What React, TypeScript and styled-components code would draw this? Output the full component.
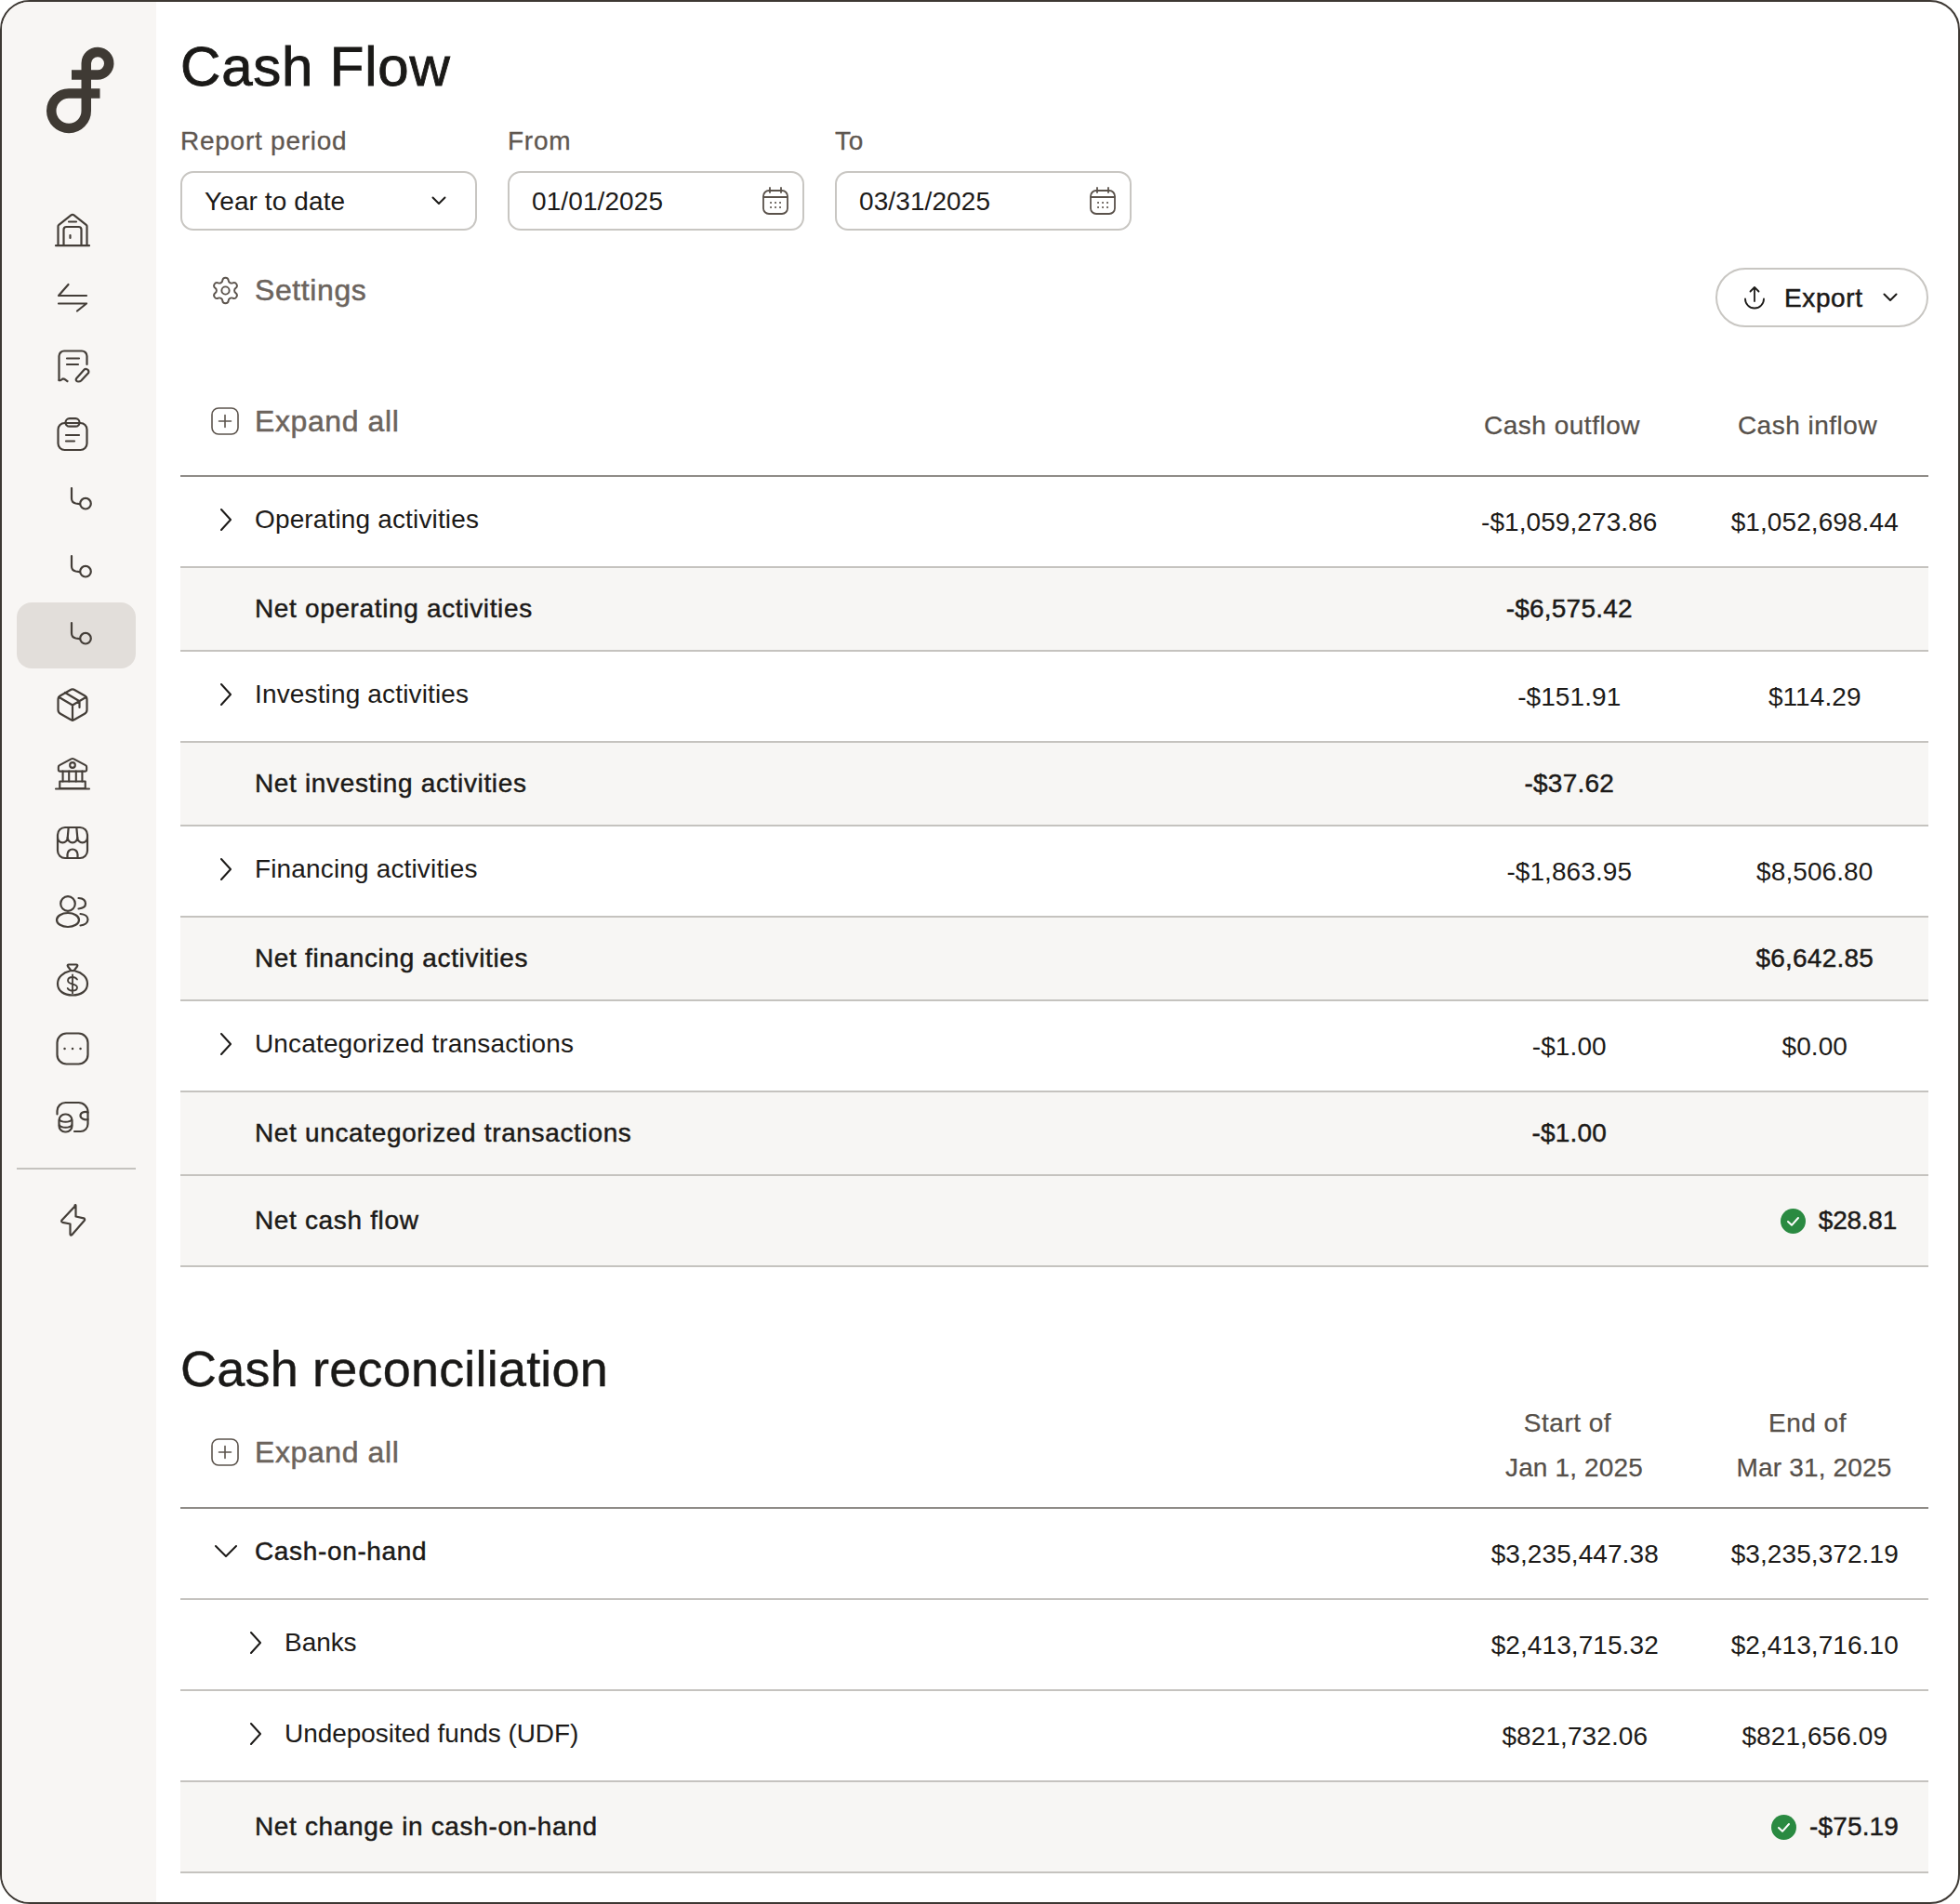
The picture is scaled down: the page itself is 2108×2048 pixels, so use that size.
import React from "react";
import styled, { createGlobalStyle } from "styled-components";
import { Settings as SettingsGear } from "lucide-react";

const Global = createGlobalStyle`
  html, body {
    margin: 0;
    background: #fff;
  }
  body {
    font-family: "Liberation Sans", Arial, sans-serif;
    color: #1c1a18;
  }
`;

const ICON = "#443e38";

const Warehouse = () => (
  <NavSvg viewBox="0 0 36 36">
    <path d="M2.5 35V14.5a2 2 0 0 1 .8-1.6L16.5 2.4a2.4 2.4 0 0 1 3 0l13.2 10.5a2 2 0 0 1 .8 1.6V35" />
    <path d="M0 35.2h36" />
    <path d="M8.5 35V18a3 3 0 0 1 3-3h13a3 3 0 0 1 3 3v17" />
    <path d="M14 9.500h8M15.500 24v3" />
  </NavSvg>
);

const Swap = () => (
  <NavSvg viewBox="0 0 36 36">
    <path d="M3 16h30M3 16L13.5 4M3 24.500h30M33 24.500L23 32.500" />
  </NavSvg>
);

const Invoice = () => (
  <NavSvg viewBox="0 0 36 36">
    <path d="M3.500 33V7a5.500 5.500 0 0 1 5.500-5.500h19a5.500 5.500 0 0 1 5.500 5.500v9" />
    <path d="M3.500 33c1.500 1 2.500-.5 4-1.500 1.500-.5 3 1 5 2.500" />
    <path d="M12 9.500h13M12 16h12" />
    <path d="M24 34.500c-2 0-3-2-1.800-3.500l8-9c2-2.200 6-.5 5 3l-8 8.500c-.8.800-2 1-3.200 1z" />
  </NavSvg>
);

const Clipboard = () => (
  <NavSvg viewBox="0 0 36 36">
    <rect x="2.500" y="6" width="31" height="29" rx="7" />
    <rect x="10.500" y="1.200" width="15" height="8.500" rx="4.200" />
    <path d="M11 19h14M11 25.500h9" />
  </NavSvg>
);

const SubBranch = () => (
  <SubSvg viewBox="0 0 26 26">
    <path d="M3 2v11c0 3 2 5 4.500 5.500l4 .6" />
    <circle cx="18" cy="18.700" r="5.800" />
  </SubSvg>
);

const Box = () => (
  <NavSvg viewBox="0 0 36 36">
    <path d="M15.500 2.200a5 5 0 0 1 5 0l10.500 6a5 5 0 0 1 2.500 4.300v11a5 5 0 0 1-2.500 4.300l-10.500 6a5 5 0 0 1-5 0L5 27.800a5 5 0 0 1-2.500-4.300v-11A5 5 0 0 1 5 8.200z" />
    <path d="M3.200 9.800L18 18.500l14.800-8.700M18 18.500V35M10 5l15.500 9.300V21" />
  </NavSvg>
);

const Bank = () => (
  <NavSvg viewBox="0 0 38 38">
    <path d="M3 15v-3.500a2 2 0 0 1 1.200-1.800L17.500 2.500a3.500 3.500 0 0 1 3 0l13.300 7.200a2 2 0 0 1 1.200 1.800V15a1.500 1.500 0 0 1-1.500 1.500h-29A1.500 1.500 0 0 1 3 15z" />
    <circle cx="19" cy="9.500" r="3" />
    <path d="M8 16.500v11.500M15 16.500v11.500M23 16.500v11.500M30 16.500v11.500" />
    <path d="M4.500 28h29v8h-29zM0 36.500h38" />
  </NavSvg>
);

const Store = () => (
  <NavSvg viewBox="0 0 36 36">
    <rect x="2" y="2" width="32" height="33" rx="8" />
    <path d="M2 13a5.300 5.300 0 0 0 10.700 0 5.300 5.300 0 0 0 10.600 0A5.300 5.300 0 0 0 34 13" />
    <path d="M12.700 13L13.700 2M23.300 13L22.300 2" />
    <path d="M12.500 35v-4a5.500 5.500 0 0 1 11 0v4" />
  </NavSvg>
);

const Users = () => (
  <NavSvg viewBox="0 0 36 36">
    <circle cx="13" cy="10" r="7.800" />
    <ellipse cx="13" cy="27.500" rx="12" ry="7.500" />
    <path d="M24.500 4c4 .2 7.500 1.800 7.500 6 0 3-3 5-7.500 5.500M26.500 21c4.500.3 8 2.500 8 6 0 3.500-3.500 6-8 6.500" />
  </NavSvg>
);

const MoneyBag = () => (
  <NavSvg viewBox="0 0 36 36">
    <path d="M13 3.500c-.8-1 0-2 1-2h8c1 0 1.800 1 1 2l-3.500 4.700h-3z" />
    <path d="M15 8.500C8 10 2 15 2 22c0 8 7 12.500 16 12.500S34 30 34 22c0-7-6-12-13-13.500" />
    <path d="M23 17.500c-1-1.500-3-2.500-5-2.500-3 0-5 1.500-5 3.800 0 5 10 2.500 10 7.200 0 2.300-2 3.700-5 3.700-2.300 0-4.300-1-5.300-2.700M18 12.500v20" strokeWidth="1.800" />
  </NavSvg>
);

const ChatDots = () => (
  <NavSvg viewBox="0 0 36 36">
    <rect x="1.500" y="1.500" width="33" height="33" rx="10" />
    <path d="M9.500 18h.1M18 18h.1M26.500 18h.1" strokeWidth="2.400" />
  </NavSvg>
);

const WalletCoins = () => (
  <NavSvg viewBox="0 0 36 36">
    <path d="M1.500 14.500V11a9 9 0 0 1 9-9h14a10 10 0 0 1 10 10v13a8 8 0 0 1-8 8H20" />
    <path d="M34.500 12.500c-4-1.500-8 .5-8 3.500s4 5 8 4" />
    <rect x="3.500" y="14.500" width="14" height="19" rx="6.500" />
    <path d="M4 20.500c2 3 11 3 13 0M4 26.500c2 3 11 3 13 0" />
  </NavSvg>
);

const Bolt = () => (
  <NavSvg viewBox="0 0 36 36">
    <path d="M21.500 2.500L6.500 18.500c-.8 1-.3 2 .8 2.300L15.500 22.500v11c0 1.200 1 1.500 1.800.7l13.500-15.500c.8-1 .3-2-.8-2.300L21.500 14.500V3c0-1-.5-1.200-1-.5z" />
  </NavSvg>
);

const LogoMark = () => (
  <LogoSvg viewBox="46 46 80 100">
    <path d="M77 80.500H104.500A12.250 12.250 0 1 0 92.750 68V119A18.750 18.750 0 1 1 74 100.500H107.500" />
  </LogoSvg>
);

const CalendarIcon = () => (
  <CalendarSvg viewBox="0 0 28 30">
    <rect x="1" y="4" width="26" height="25" rx="6" />
    <path d="M1.500 11h25M8 1v5M20 1v5" />
    <path d="M9 17h.1M14 17h.1M19 17h.1M9 22h.1M14 22h.1M19 22h.1" strokeWidth="2" />
  </CalendarSvg>
);

const PlusSquare = () => (
  <SmallSvg viewBox="0 0 30 30">
    <rect x="1" y="1" width="28" height="28" rx="7" />
    <path d="M15 8.500v13M8.500 15h13" />
  </SmallSvg>
);

const SmallChevronDown = () => (
  <ChevronSvg $w={16} $h={10} viewBox="0 0 16 10">
    <path d="M1.500 1.500L8 8l6.500-6.500" />
  </ChevronSvg>
);

const RowChevronRight = () => (
  <ChevronSvg $w={12} $h={24} viewBox="0 0 12 24">
    <path d="M1 1l10 11L1 23" />
  </ChevronSvg>
);

const RowChevronDown = () => (
  <ChevronSvg $w={24} $h={14} viewBox="0 0 24 14">
    <path d="M1 1l11 11L23 1" />
  </ChevronSvg>
);

const ExportIcon = () => (
  <ExportSvg viewBox="0 0 24 26">
    <path d="M12 2v15M7.500 6.500L12 2l4.500 4.500" />
    <path d="M2 14.500a10 10 0 0 0 20 0" />
  </ExportSvg>
);

const CheckBadge = () => (
  <BadgeSvg viewBox="0 0 27 27">
    <circle cx="13.500" cy="13.500" r="13.500" fill="#2a8a41" />
    <path d="M8 14l4 3.800L19 10" fill="none" stroke="#fff" strokeWidth="2" strokeLinecap="round" strokeLinejoin="round" />
  </BadgeSvg>
);

type Row = {
  label: string;
  outflow?: string;
  inflow?: string;
  net?: boolean;
};

const cashRows: Row[] = [
  { label: "Operating activities", outflow: "-$1,059,273.86", inflow: "$1,052,698.44" },
  { label: "Net operating activities", outflow: "-$6,575.42", net: true },
  { label: "Investing activities", outflow: "-$151.91", inflow: "$114.29" },
  { label: "Net investing activities", outflow: "-$37.62", net: true },
  { label: "Financing activities", outflow: "-$1,863.95", inflow: "$8,506.80" },
  { label: "Net financing activities", inflow: "$6,642.85", net: true },
  { label: "Uncategorized transactions", outflow: "-$1.00", inflow: "$0.00" },
  { label: "Net uncategorized transactions", outflow: "-$1.00", net: true },
];

const App = () => {
  return (
    <Frame>
      <Global />
      <Sidebar>
        <LogoWrap>
          <LogoMark />
        </LogoWrap>
        <NavGroup>
          <NavItem $h={72.5}><Warehouse /></NavItem>
          <NavItem $h={73.5}><Swap /></NavItem>
          <NavItem $h={74.5}><Invoice /></NavItem>
          <NavItem $h={72}><Clipboard /></NavItem>
        </NavGroup>
        <SubGroup>
          <NavItem $h={71} $sub><SubBranch /></NavItem>
          <NavItem $h={71} $sub><SubBranch /></NavItem>
          <NavItem $h={71} $sub $active><SubBranch /></NavItem>
        </SubGroup>
        <LowerGroup>
          <NavItem $h={74}><Box /></NavItem>
          <NavItem $h={74}><Bank /></NavItem>
          <NavItem $h={74}><Store /></NavItem>
          <NavItem $h={74}><Users /></NavItem>
          <NavItem $h={74}><MoneyBag /></NavItem>
          <NavItem $h={74}><ChatDots /></NavItem>
          <NavItem $h={74}><WalletCoins /></NavItem>
        </LowerGroup>
        <NavDivider />
        <NavItem $h={72}><Bolt /></NavItem>
      </Sidebar>

      <Main>
        <Title>Cash Flow</Title>
        <Filters>
          <Field>
            <FieldLabel>Report period</FieldLabel>
            <InputBox>
              <span>Year to date</span>
              <SelectArrow>
                <SmallChevronDown />
              </SelectArrow>
            </InputBox>
          </Field>
          <Field>
            <FieldLabel>From</FieldLabel>
            <InputBox>
              <span>01/01/2025</span>
              <CalendarIcon />
            </InputBox>
          </Field>
          <Field>
            <FieldLabel>To</FieldLabel>
            <InputBox>
              <span>03/31/2025</span>
              <CalendarIcon />
            </InputBox>
          </Field>
        </Filters>

        <Toolbar>
          <QuietAction $lift={-4}>
            <Gear size={33} strokeWidth={1.4} color="#5c544d" />
            Settings
          </QuietAction>
          <ExportButton>
            <ExportIcon />
            <span>Export</span>
            <SmallChevronDown />
          </ExportButton>
        </Toolbar>

        <HeadRow $outflow={282} $top={49} $h={112}>
          <QuietAction $lift={6}>
            <PlusSquare />
            Expand all
          </QuietAction>
          <HeadCell $lift={-4}>
            <HeadLine $shift>Cash outflow</HeadLine>
          </HeadCell>
          <HeadCell $lift={-4}>
            <HeadLine $shift>Cash inflow</HeadLine>
          </HeadCell>
        </HeadRow>

        {cashRows.map((row) => (
          <TableRow key={row.label} $outflow={282} $net={row.net}>
            <RowLabel $net={row.net}>
              {!row.net && (
                <ChevronSlot>
                  <RowChevronRight />
                </ChevronSlot>
              )}
              <LabelText $strong={row.net}>{row.label}</LabelText>
            </RowLabel>
            <Amount $net={row.net}>{row.outflow}</Amount>
            <Amount $net={row.net}>{row.inflow}</Amount>
          </TableRow>
        ))}
        <TableRow $outflow={282} $net $tall>
          <RowLabel $net>
            <LabelText $strong>Net cash flow</LabelText>
          </RowLabel>
          <Amount />
          <CheckedAmount $inset={34} $track={-0.25}>
            <CheckBadge />
            $28.81
          </CheckedAmount>
        </TableRow>

        <SectionTitle>Cash reconciliation</SectionTitle>
        <HeadRow $outflow={270} $top={-4} $h={116}>
          <QuietAction $lift={4}>
            <PlusSquare />
            Expand all
          </QuietAction>
          <HeadCell $lift={18}>
            <HeadLine $shift>Start of</HeadLine>
            <HeadLine $date>Jan 1, 2025</HeadLine>
          </HeadCell>
          <HeadCell $lift={18}>
            <HeadLine $shift>End of</HeadLine>
            <HeadLine $date>Mar 31, 2025</HeadLine>
          </HeadCell>
        </HeadRow>

        <TableRow $outflow={270} $tall>
          <RowLabel>
            <ChevronSlot>
              <RowChevronDown />
            </ChevronSlot>
            <LabelText $strong>Cash-on-hand</LabelText>
          </RowLabel>
          <Amount>$3,235,447.38</Amount>
          <Amount>$3,235,372.19</Amount>
        </TableRow>
        <TableRow $outflow={270} $tall>
          <RowLabel $indent>
            <ChevronSlot>
              <RowChevronRight />
            </ChevronSlot>
            <LabelText $tight>Banks</LabelText>
          </RowLabel>
          <Amount>$2,413,715.32</Amount>
          <Amount>$2,413,716.10</Amount>
        </TableRow>
        <TableRow $outflow={270} $tall>
          <RowLabel $indent>
            <ChevronSlot>
              <RowChevronRight />
            </ChevronSlot>
            <LabelText $tight>Undeposited funds (UDF)</LabelText>
          </RowLabel>
          <Amount>$821,732.06</Amount>
          <Amount>$821,656.09</Amount>
        </TableRow>
        <TableRow $outflow={270} $net $tall>
          <RowLabel $net>
            <LabelText $strong>Net change in cash-on-hand</LabelText>
          </RowLabel>
          <Amount />
          <CheckedAmount $inset={32} $track={0.15}>
            <CheckBadge />
            -$75.19
          </CheckedAmount>
        </TableRow>
      </Main>
    </Frame>
  );
};

export default App;

const Frame = styled.div`
  box-sizing: border-box;
  width: 2108px;
  height: 2048px;
  border: 2px solid #3d3833;
  border-radius: 32px;
  overflow: hidden;
  display: flex;
  background: #fff;
`;

const Sidebar = styled.aside`
  box-sizing: border-box;
  width: 166px;
  flex: none;
  padding: 0 22px 0 16px;
  background: #f8f6f4;
`;

const LogoWrap = styled.div`
  box-sizing: border-box;
  height: 208.5px;
  padding: 44px 0 0 28px;
`;

const LogoSvg = styled.svg`
  display: block;
  width: 80px;
  height: 100px;
  fill: none;
  stroke: #3f3a34;
  stroke-width: 10.5;
`;

const NavGroup = styled.div`
  display: flex;
  flex-direction: column;
`;

const SubGroup = styled(NavGroup)`
  gap: 1.5px;
`;

const LowerGroup = styled(NavGroup)`
  margin-top: 2px;
`;

const NavItem = styled.div<{ $h: number; $sub?: boolean; $active?: boolean }>`
  box-sizing: border-box;
  height: ${(p) => p.$h}px;
  display: flex;
  align-items: center;
  padding-left: ${(p) => (p.$sub ? 56 : 42)}px;
  border-radius: 16px;
  background: ${(p) => (p.$active ? "#e2deda" : "transparent")};
`;

const NavSvg = styled.svg`
  display: block;
  width: 36px;
  height: 36px;
  fill: none;
  stroke: ${ICON};
  stroke-width: 2.2;
  stroke-linecap: round;
  stroke-linejoin: round;
  overflow: visible;
`;

const SubSvg = styled(NavSvg)`
  width: 26px;
  height: 26px;
  margin-bottom: 5px;
`;

const NavDivider = styled.div`
  height: 2px;
  margin-top: 17px;
  margin-bottom: 18px;
  background: #c5c3bf;
`;

const Main = styled.main`
  box-sizing: border-box;
  flex: 1;
  min-width: 0;
  padding: 32px 32px 0 26px;
`;

const Title = styled.h1`
  margin: 0;
  font-size: 60px;
  line-height: 76px;
  font-weight: 400;
  letter-spacing: 0.8px;
  -webkit-text-stroke: 0.9px #1a1917;
  color: #1a1917;
`;

const Filters = styled.div`
  display: flex;
  gap: 33px;
  margin-top: 24px;
`;

const Field = styled.div`
  width: 319px;
`;

const FieldLabel = styled.div`
  height: 36px;
  margin-bottom: 14px;
  font-size: 28px;
  line-height: 36px;
  letter-spacing: 0.75px;
  color: #5f5750;
  -webkit-text-stroke: 0.3px #5f5750;
`;

const InputBox = styled.div`
  box-sizing: border-box;
  height: 64px;
  display: flex;
  align-items: center;
  justify-content: space-between;
  padding: 2px 15px 0 24px;
  border: 2px solid #c8c6c2;
  border-radius: 14px;
  font-size: 28px;
  letter-spacing: 0.1px;
  color: #1c1a18;

  & > svg {
    margin-top: -2px;
  }
`;

const SelectArrow = styled.span`
  display: flex;
  margin-top: -2px;
  padding-right: 16px;
`;

const CalendarSvg = styled.svg`
  width: 28px;
  height: 30px;
  fill: none;
  stroke: #5a524b;
  stroke-width: 1.8;
  stroke-linecap: round;
`;

const Toolbar = styled.div`
  display: flex;
  justify-content: space-between;
  align-items: flex-start;
  height: 64px;
  margin-top: 40px;
`;

const QuietAction = styled.div<{ $lift: number }>`
  display: flex;
  align-items: center;
  gap: 17px;
  height: 48px;
  padding-left: 35px;
  margin-bottom: ${(p) => p.$lift}px;
  font-size: 32px;
  letter-spacing: 0.6px;
  color: #6c645d;
  -webkit-text-stroke: 0.5px #6c645d;

  & > svg {
    margin-left: -2px;
    flex: none;
  }
`;

const Gear = styled(SettingsGear)`
  && {
    margin: 0 -2px 0 -3px;
  }
`;

const SmallSvg = styled.svg`
  width: 30px;
  height: 30px;
  fill: none;
  stroke: #5c544d;
  stroke-width: 1.6;
  stroke-linecap: round;
`;

const ChevronSvg = styled.svg<{ $w: number; $h: number }>`
  display: block;
  width: ${(p) => p.$w}px;
  height: ${(p) => p.$h}px;
  fill: none;
  stroke: #1c1a18;
  stroke-width: 2;
  stroke-linecap: round;
  stroke-linejoin: round;
`;

const ExportButton = styled.div`
  box-sizing: border-box;
  width: 229px;
  height: 64px;
  display: flex;
  align-items: center;
  padding-left: 28px;
  border: 2px solid #c8c6c2;
  border-radius: 32px;
  font-size: 28px;
  letter-spacing: 0.6px;
  color: #1c1a18;
  -webkit-text-stroke: 0.5px #1c1a18;

  & > span {
    margin: 2px 21px 0 20px;
  }
`;

const ExportSvg = styled.svg`
  width: 24px;
  height: 26px;
  flex: none;
  fill: none;
  stroke: #1c1a18;
  stroke-width: 1.8;
  stroke-linecap: round;
  stroke-linejoin: round;
`;

const HeadRow = styled.div<{ $outflow: number; $top: number; $h: number }>`
  box-sizing: border-box;
  height: ${(p) => p.$h}px;
  margin-top: ${(p) => p.$top}px;
  display: grid;
  grid-template-columns: 1fr ${(p) => p.$outflow}px 246px;
  align-items: center;
  border-bottom: 2px solid #8f8c88;
`;

const HeadCell = styled.div<{ $lift: number }>`
  display: flex;
  flex-direction: column;
  align-items: center;
  margin-bottom: ${(p) => p.$lift}px;
`;

const HeadLine = styled.span<{ $shift?: boolean; $date?: boolean }>`
  font-size: 28px;
  line-height: 48px;
  letter-spacing: ${(p) => (p.$date ? 0.15 : 0.5)}px;
  color: #56504a;
  -webkit-text-stroke: 0.25px #56504a;
  padding-right: ${(p) => (p.$shift ? 14 : 0)}px;
`;

const TableRow = styled.div<{ $outflow: number; $net?: boolean; $tall?: boolean }>`
  box-sizing: border-box;
  height: ${(p) => (p.$net && !p.$tall ? 90 : 98)}px;
  display: grid;
  grid-template-columns: 1fr ${(p) => p.$outflow}px 246px;
  align-items: center;
  border-bottom: 2px solid #c5c3bf;
  background: ${(p) => (p.$net ? "#f7f6f4" : "transparent")};
`;

const RowLabel = styled.div<{ $net?: boolean; $indent?: boolean }>`
  display: flex;
  align-items: center;
  padding-left: ${(p) => (p.$net ? 80 : p.$indent ? 47 : 15)}px;
  margin-bottom: ${(p) => (p.$net ? 0 : 4)}px;
`;

const ChevronSlot = styled.span`
  display: flex;
  justify-content: center;
  width: 65px;
  padding-left: 2px;
  box-sizing: border-box;
`;

const LabelText = styled.span<{ $strong?: boolean; $tight?: boolean }>`
  font-size: 28px;
  letter-spacing: ${(p) => (p.$strong ? 0.65 : p.$tight ? -0.05 : 0.15)}px;
  color: #1c1a18;
  ${(p) => (p.$strong ? "-webkit-text-stroke: 0.45px #1c1a18;" : "")}
`;

const Amount = styled.div<{ $net?: boolean }>`
  box-sizing: border-box;
  padding: ${(p) => (p.$net ? 0 : 2)}px 0 0 1.500px;
  text-align: center;
  font-size: 28px;
  letter-spacing: ${(p) => (p.$net ? 0.2 : 0.08)}px;
  color: #1c1a18;
  ${(p) => (p.$net ? "-webkit-text-stroke: 0.45px #1c1a18;" : "")}
`;

const CheckedAmount = styled.div<{ $inset: number; $track: number }>`
  display: flex;
  align-items: center;
  justify-content: flex-end;
  gap: 14px;
  padding-right: ${(p) => p.$inset}px;
  font-size: 28px;
  letter-spacing: ${(p) => p.$track}px;
  color: #1c1a18;
  -webkit-text-stroke: 0.45px #1c1a18;
`;

const BadgeSvg = styled.svg`
  width: 27px;
  height: 27px;
  flex: none;
`;

const SectionTitle = styled.h2`
  margin: 70px 0 0;
  font-size: 54px;
  line-height: 78px;
  font-weight: 400;
  letter-spacing: 0.2px;
  color: #1a1917;
  -webkit-text-stroke: 0.4px #1a1917;
`;
